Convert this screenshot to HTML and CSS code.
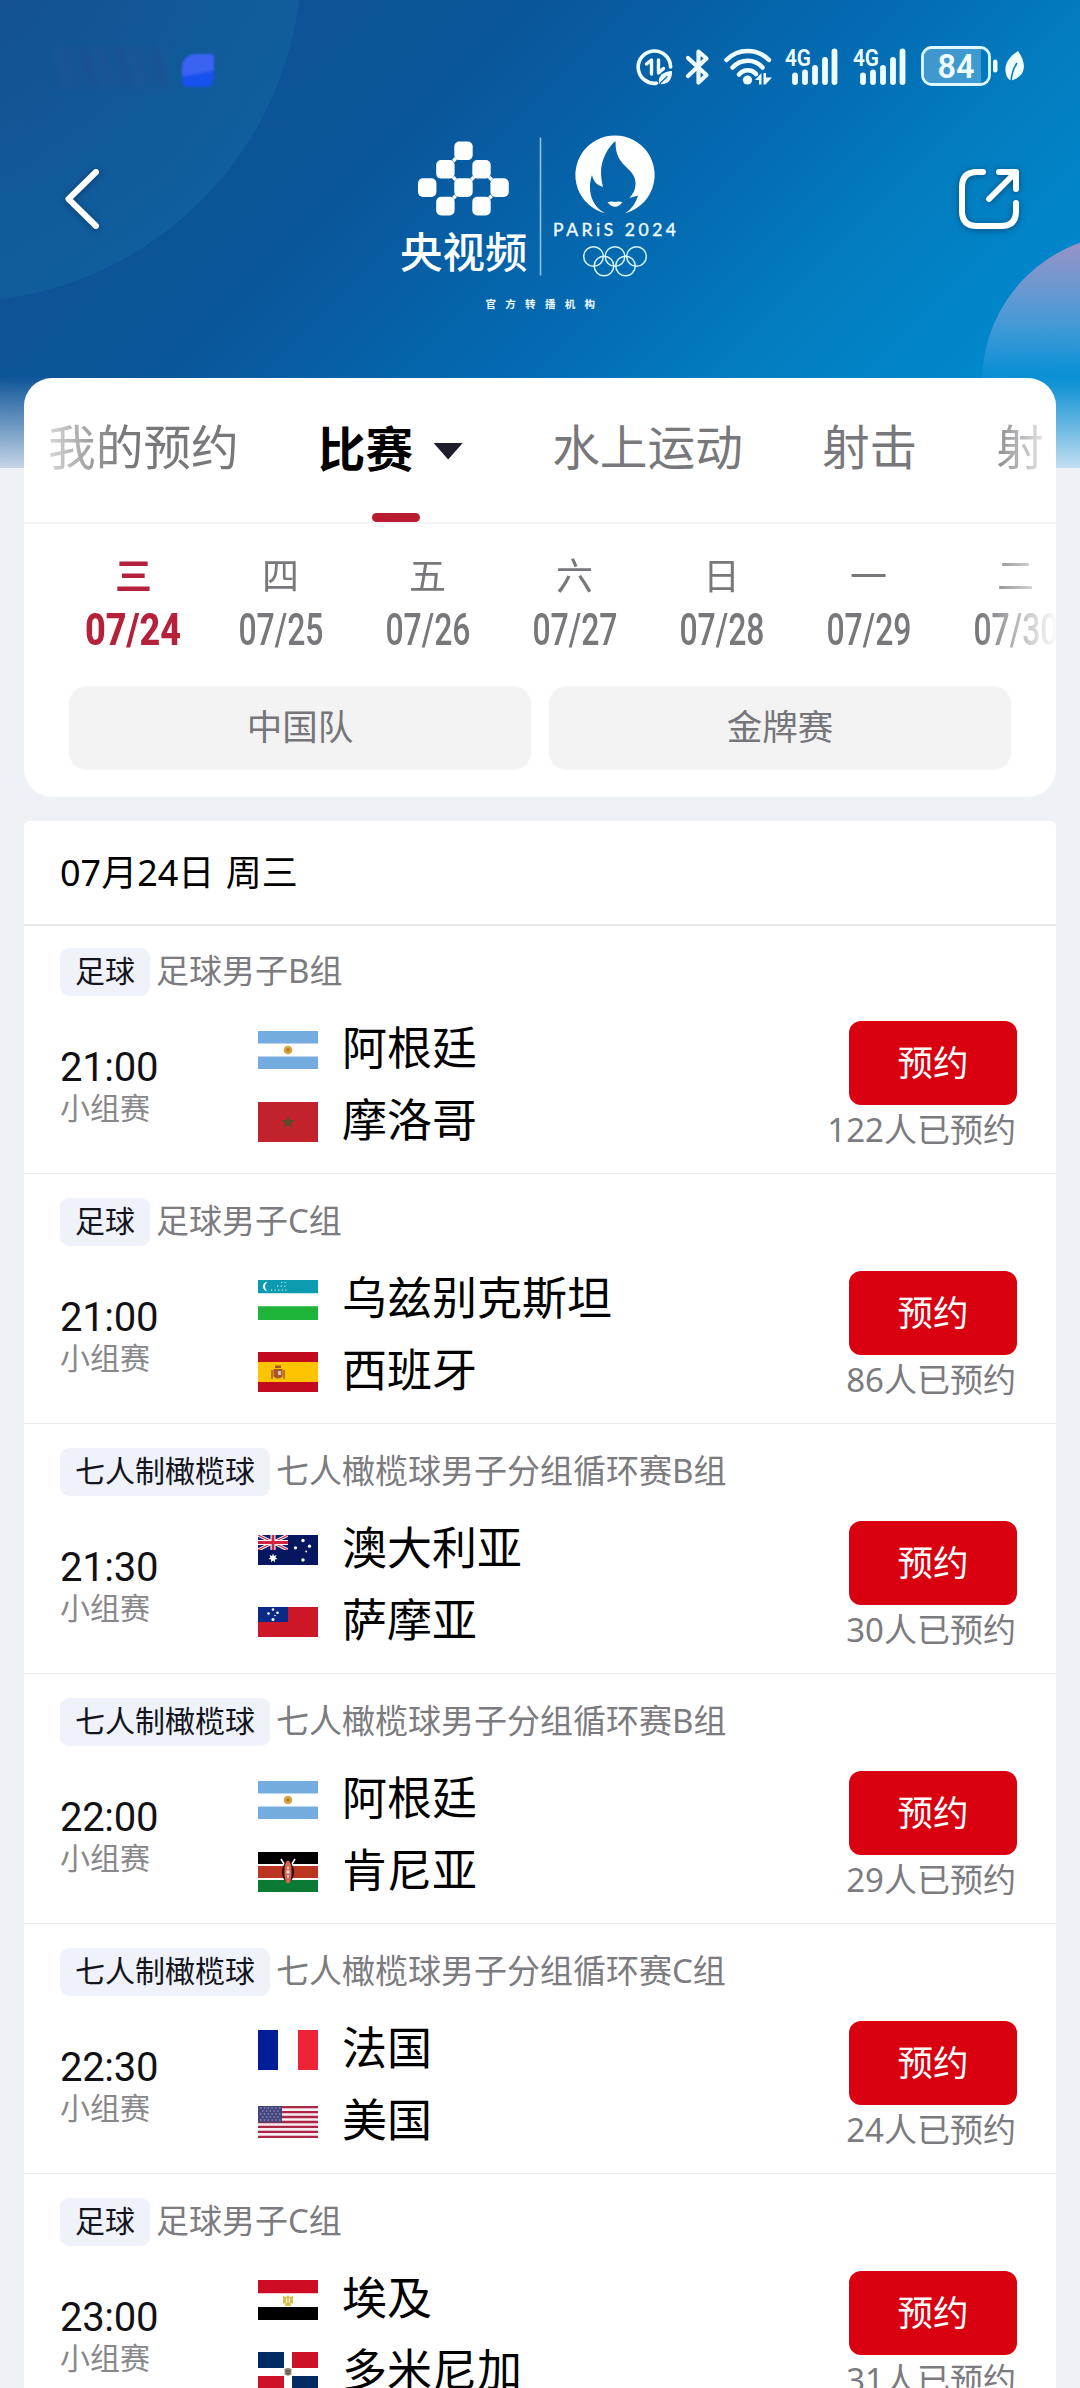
FILE: index.html
```html
<!DOCTYPE html>
<html lang="zh-CN">
<head>
<meta charset="utf-8">
<title>赛程</title>
<link rel="stylesheet" href="styles.css">
</head>
<body>
<svg class="defs" aria-hidden="true">
  <defs>
    <symbol id="signal" viewBox="0 0 54 40">
      <text x="0" y="19.500" textLength="26" lengthAdjust="spacingAndGlyphs" class="net">4G</text>
      <g stroke="#f0fdff" stroke-width="5.8" stroke-linecap="round">
        <path d="M10 29.5V36M20 26.5V36M30 22V36M40 14V36M49.500 5.500V36"/>
      </g>
    </symbol>
    <symbol id="ar" viewBox="0 0 60 38"><path fill="#74acdf" d="M0 0h60v38H0z"/><path fill="#fff" d="M0 12.500h60v13H0z"/><circle cx="30" cy="19" r="4.300" fill="#d9a341"/><circle cx="30" cy="19" r="2" fill="#b9812f"/></symbol>
    <symbol id="ma" viewBox="0 0 60 40"><path fill="#c1222b" d="M0 0h60v40H0z"/><path fill="#5b4a2b" d="M30 13.500l1.700 4.700 5 .1-4 3 1.500 4.800-4.200-2.900-4.200 2.900 1.500-4.800-4-3 5-.1z"/></symbol>
    <symbol id="uz" viewBox="0 0 60 40"><path fill="#fff" d="M0 0h60v40H0z"/><path fill="#0c9bb0" d="M0 0h60v13.300H0z"/><path fill="#1fb53a" d="M0 26.300h60V40H0z"/><path d="M9.500 2a4.600 4.600 0 1 0 0 9.200a5.500 5.500 0 0 1 0-9.200z" fill="#fff"/><path d="M23 2.500h6M19 6.200h10M13 10.200h16" stroke="#bfe6ec" stroke-width="1.200" stroke-dasharray="1.200 2.400"/></symbol>
    <symbol id="es" viewBox="0 0 60 40"><path fill="#c10a1e" d="M0 0h60v40H0z"/><path fill="#ffc400" d="M0 10h60v20H0z"/><path fill="#a8552c" d="M15.500 17h9v7.500q-4.500 4-9 0zM17 13.500h6v2.500h-6z"/><path stroke="#a8552c" stroke-width="1.500" d="M14 18v9M26 18v9"/><path fill="#d9c6bb" d="M20 19h3v4h-3z"/></symbol>
    <symbol id="jack" viewBox="0 0 30 15"><path fill="#0a1f6b" d="M0 0h30v15H0z"/><path d="M0 0l30 15M30 0L0 15" stroke="#fff" stroke-width="3.200"/><path d="M0 0l30 15M30 0L0 15" stroke="#d3304a" stroke-width="1.200"/><path d="M15 0v15M0 7.500h30" stroke="#fff" stroke-width="5"/><path d="M15 0v15M0 7.500h30" stroke="#d3243f" stroke-width="2.800"/></symbol>
    <symbol id="au" viewBox="0 0 60 30"><path fill="#06175f" d="M0 0h60v30H0z"/><use href="#jack" width="30" height="15"/><path fill="#fff" d="M15 18.600l1 2.500 2.500-1-1 2.500 2 1.500-2.700.5.200 2.700-2-1.800-2 1.800.2-2.700-2.700-.5 2-1.500-1-2.500 2.500 1z"/><g fill="#fff"><circle cx="45" cy="5.500" r="1.700"/><circle cx="37.500" cy="12.800" r="1.600"/><circle cx="51.500" cy="11.200" r="1.600"/><circle cx="48.200" cy="16.500" r=".9"/><circle cx="45" cy="25" r="1.700"/></g></symbol>
    <symbol id="ws" viewBox="0 0 60 30"><path fill="#ce1726" d="M0 0h60v30H0z"/><path fill="#0b2a85" d="M0 0h30v15H0z"/><g fill="#fff"><circle cx="15" cy="2.500" r="1.300"/><circle cx="10.500" cy="6.500" r="1.300"/><circle cx="19.500" cy="5.800" r="1.300"/><circle cx="17" cy="8.500" r=".8"/><circle cx="15" cy="12.500" r="1.500"/></g></symbol>
    <symbol id="ke" viewBox="0 0 60 40"><path fill="#fff" d="M0 0h60v40H0z"/><path d="M0 0h60v12H0z"/><path fill="#bb3620" d="M0 14h60v12H0z"/><path fill="#0b7a35" d="M0 28h60v12H0z"/><path d="M23 7l3 5M37 7l-3 5" stroke="#fff" stroke-width="1.600"/><ellipse cx="30" cy="20" rx="6" ry="10" fill="#1c0d0a"/><ellipse cx="30" cy="20" rx="3.700" ry="11.500" fill="#dc6350"/><path d="M30 14.500v3M30 23v3" stroke="#fff" stroke-width="1.200"/><circle cx="30" cy="20" r="1.600" fill="#fff"/></symbol>
    <symbol id="fr" viewBox="0 0 60 40"><path fill="#fff" d="M0 0h60v40H0z"/><path fill="#001e96" d="M0 0h20v40H0z"/><path fill="#ee2436" d="M40 0h20v40H40z"/></symbol>
    <symbol id="us" viewBox="0 0 60 32"><path fill="#f7eef1" d="M0 0h60v32H0z"/><path stroke="#ab2745" stroke-width="2.300" d="M0 1.200h60M0 6.100h60M0 11h60M0 16h60M0 20.900h60M0 25.800h60M0 30.800h60"/><path fill="#46467f" d="M0 0h24v16.500H0z"/><path stroke="#aeb2d2" stroke-width="1.200" stroke-dasharray="1.400 2.400" d="M2 2h21M2 8h21M2 14h21M4 5h18M4 11h18"/></symbol>
    <symbol id="eg" viewBox="0 0 60 40"><path fill="#fff" d="M0 0h60v40H0z"/><path fill="#ce0d24" d="M0 0h60v13.300H0z"/><path d="M0 27h60v13H0z"/><path fill="#d9bd4d" d="M25 16l3.500 1 1.500-2 1.500 2 3.500-1v8l-2.500-1 .5 3h-6l.5-3-2.500 1z"/><path d="M28.700 18.500v4M31.300 18.500v4" stroke="#fff"/></symbol>
    <symbol id="do" viewBox="0 0 60 40"><path fill="#fff" d="M0 0h60v40H0z"/><path fill="#022b61" d="M0 0h26v16H0zM34 24h26v16H34z"/><path fill="#cd1126" d="M34 0h26v16H34zM0 24h26v16H0z"/><path fill="#8b8578" d="M26.500 17q3.500-2 7 0v5q-3.500 3.500-7 0z"/><path d="M28 19h4M28.500 21.500h3" stroke="#463a31"/></symbol>
  </defs>
</svg>

<main class="screen">
  <header class="hero">
    <div class="statusbar">
      <div class="carrier"><i class="smudge"></i><i class="blob"></i></div>
      <div class="status-icons">
        <svg class="data" width="38" height="40" viewBox="0 0 38 40" fill="none" stroke="#f0fdff" stroke-linecap="round" stroke-linejoin="round">
          <path d="M20.500 37.200A16.200 16.200 0 1 1 34.600 21" stroke-width="3.600"/>
          <path d="M10.500 18L15.500 14V28M22.500 14V27L27.500 22.500" stroke-width="3.400"/>
          <path d="M23 38C21.500 29 28 25.500 36 25C36.500 34 31.500 39 23 38z" fill="#f0fdff" stroke="none"/><path d="M24 37.500L31 30.500" stroke="#0867ad" stroke-width="1.300"/>
        </svg>
        <svg class="bt" width="25" height="40" viewBox="0 0 25 40" fill="none" stroke="#f0fdff" stroke-width="4.200" stroke-linecap="round" stroke-linejoin="round"><path d="M3 12L21.500 29L13.500 36.500V5.500L21.500 12.500L3 30"/></svg>
        <svg class="wifi" width="48" height="40" viewBox="0 0 48 40" fill="none" stroke="#f0fdff" stroke-width="4.500" stroke-linecap="round">
          <path d="M2.500 14C14 2 33 2 45 14M8.500 21.500C17 12.500 30.500 12.500 38.500 21.500M15 28.500C20 23 27.500 23 32 28"/><circle cx="23.500" cy="34" r="4.600" fill="#f0fdff" stroke="none"/><path fill="#f0fdff" stroke="none" d="M31 34l6.500-7v11.500h-2.500v-4.500zM39.500 27h2.500v4.500h6l-6.500 7h-2z"/>
        </svg>
        <svg class="sig" width="54" height="40"><use href="#signal"/></svg>
        <svg class="sig2" width="54" height="40"><use href="#signal"/></svg>
        <svg class="power" width="80" height="42" viewBox="0 0 80 42"><path d="M12 3h49v36H12a8 8 0 0 1-8-8V11a8 8 0 0 1 8-8z" fill="#c9efff" fill-opacity=".3"/><rect x="2.500" y="2.500" width="67" height="37" rx="9" fill="none" stroke="#dff8ff" stroke-width="2.800"/><rect x="73" y="14.500" width="4.500" height="13" rx="2.200" fill="#f0fdff"/><text x="17.500" y="32.500" class="batt" textLength="37" lengthAdjust="spacingAndGlyphs">84</text></svg>
        <svg width="21" height="40" viewBox="0 0 21 40"><path d="M14 5C3 12 0 20 2 28C3 32 5 34 7 34.500C21 31 24 19 14 5z" fill="#f0fdff"/><path d="M7 36Q7.500 25 13 17" stroke="#0a7ac1" stroke-width="1.600" fill="none"/></svg>
      </div>
    </div>
    <nav class="topnav">
      <svg class="back" width="44" height="72" viewBox="0 0 44 72"><path d="M36 9L8.500 36L36 63" fill="none" stroke="#fff" stroke-width="6" stroke-linecap="round" stroke-linejoin="round"/></svg>
      <svg class="brand" width="290" height="190" viewBox="395 130 290 190">
        <g fill="#fff">
          <rect x="455.300" y="141.500" width="18.400" height="18.600" rx="5"/>
          <rect x="437.200" y="160" width="18.400" height="18.600" rx="5"/><rect x="473.300" y="160" width="18.400" height="18.600" rx="5"/>
          <rect x="419" y="178.300" width="18.400" height="18.600" rx="5"/><rect x="455.300" y="178.300" width="18.400" height="18.600" rx="5"/><rect x="491.400" y="178.300" width="18.400" height="18.600" rx="5"/>
          <rect x="437.200" y="196.800" width="18.400" height="18.600" rx="5"/><rect x="473.300" y="196.800" width="18.400" height="18.600" rx="5"/>
          <path d="M455.500 157l2.500 2.500-2.500 3-2.500-2.500zM455.500 176l2.500 2.500-2.500 2.500-2.500-2.500zM473.500 176l2.500 2.500-2.500 2.500-2.500-2.500zM491.500 176l2.500 2.500-2.500 2.500-2.500-2.500zM455.500 194.500l2.500 2.500-2.500 2.500-2.500-2.500zM491.500 194.500l2.500 2.500-2.500 2.500-2.500-2.500z"/>
        </g>
        <text class="brand-name" x="401" y="267.500">央视频</text>
        <path d="M541.500 137.500V275.500" stroke="#8fc1e4" stroke-width="1.600"/>
        <path fill="#fff" d="M606 213.300A39.600 39.600 0 1 1 626 213.300C633 209 637 202.500 639 195.500L630.500 198C635 193 637 188 636.500 182C635 166 616 168 616.500 141C609 147 602 160 602 172C602 178 603 183 604 187C597 185 594 180 593 175C588 190 592 206 606 213.300z"/>
        <path d="M608.500 202.500Q612 200.800 616 202Q620 200.800 623.500 202.500Q616 211 608.500 202.500z" fill="#fff"/>
        <text class="paris" x="554" y="235.700" textLength="123">PARiS 2024</text>
        <g fill="none" stroke="#d8f4ff" stroke-width="1.500"><circle cx="594.500" cy="256.500" r="9.800"/><circle cx="616" cy="256.500" r="9.800"/><circle cx="637.500" cy="256.500" r="9.800"/><circle cx="605" cy="266" r="9.800"/><circle cx="626.500" cy="266" r="9.800"/></g>
        <text class="official" x="486.500" y="307.500">官方转播机构</text>
      </svg>
      <svg class="share" width="72" height="72" viewBox="0 0 72 72"><path d="M30 9H24Q9 9 9 24V48Q9 63 24 63H48Q63 63 63 48V40M46 9H63V26M62 10L36 36" fill="none" stroke="#fff" stroke-width="6" stroke-linecap="round" stroke-linejoin="round"/></svg>
    </nav>
  </header>

  <section class="filter-card">
    <div class="tabs">
      <span class="tab">我的预约</span>
      <span class="tab tab-active">比赛<i class="caret"></i></span>
      <span class="tab">水上运动</span>
      <span class="tab">射击</span>
      <span class="tab">射</span>
    </div>
    <div class="days">
      <div class="day day-active"><span>三</span><b>07/24</b></div>
      <div class="day"><span>四</span><b>07/25</b></div>
      <div class="day"><span>五</span><b>07/26</b></div>
      <div class="day"><span>六</span><b>07/27</b></div>
      <div class="day"><span>日</span><b>07/28</b></div>
      <div class="day"><span>一</span><b>07/29</b></div>
      <div class="day"><span>二</span><b>07/30</b></div>
    </div>
    <div class="chips"><span class="chip">中国队</span><span class="chip">金牌赛</span></div>
  </section>

  <section class="schedule">
    <h2 class="date">07月24日 周三</h2>

    <article class="match">
      <div class="event"><span class="tag">足球</span><span>足球男子B组</span></div>
      <div class="detail">
        <div class="when"><time>21:00</time><span>小组赛</span></div>
        <div class="teams">
          <div class="team"><svg width="60" height="38"><use href="#ar"/></svg><span>阿根廷</span></div>
          <div class="team"><svg width="60" height="40"><use href="#ma"/></svg><span>摩洛哥</span></div>
        </div>
        <div class="book"><button>预约</button><span>122人已预约</span></div>
      </div>
    </article>

    <article class="match">
      <div class="event"><span class="tag">足球</span><span>足球男子C组</span></div>
      <div class="detail">
        <div class="when"><time>21:00</time><span>小组赛</span></div>
        <div class="teams">
          <div class="team"><svg width="60" height="40"><use href="#uz"/></svg><span>乌兹别克斯坦</span></div>
          <div class="team"><svg width="60" height="40"><use href="#es"/></svg><span>西班牙</span></div>
        </div>
        <div class="book"><button>预约</button><span>86人已预约</span></div>
      </div>
    </article>

    <article class="match">
      <div class="event"><span class="tag">七人制橄榄球</span><span>七人橄榄球男子分组循环赛B组</span></div>
      <div class="detail">
        <div class="when"><time>21:30</time><span>小组赛</span></div>
        <div class="teams">
          <div class="team"><svg width="60" height="30"><use href="#au"/></svg><span>澳大利亚</span></div>
          <div class="team"><svg width="60" height="30"><use href="#ws"/></svg><span>萨摩亚</span></div>
        </div>
        <div class="book"><button>预约</button><span>30人已预约</span></div>
      </div>
    </article>

    <article class="match">
      <div class="event"><span class="tag">七人制橄榄球</span><span>七人橄榄球男子分组循环赛B组</span></div>
      <div class="detail">
        <div class="when"><time>22:00</time><span>小组赛</span></div>
        <div class="teams">
          <div class="team"><svg width="60" height="38"><use href="#ar"/></svg><span>阿根廷</span></div>
          <div class="team"><svg width="60" height="40"><use href="#ke"/></svg><span>肯尼亚</span></div>
        </div>
        <div class="book"><button>预约</button><span>29人已预约</span></div>
      </div>
    </article>

    <article class="match">
      <div class="event"><span class="tag">七人制橄榄球</span><span>七人橄榄球男子分组循环赛C组</span></div>
      <div class="detail">
        <div class="when"><time>22:30</time><span>小组赛</span></div>
        <div class="teams">
          <div class="team"><svg width="60" height="40"><use href="#fr"/></svg><span>法国</span></div>
          <div class="team"><svg width="60" height="32"><use href="#us"/></svg><span>美国</span></div>
        </div>
        <div class="book"><button>预约</button><span>24人已预约</span></div>
      </div>
    </article>

    <article class="match">
      <div class="event"><span class="tag">足球</span><span>足球男子C组</span></div>
      <div class="detail">
        <div class="when"><time>23:00</time><span>小组赛</span></div>
        <div class="teams">
          <div class="team"><svg width="60" height="40"><use href="#eg"/></svg><span>埃及</span></div>
          <div class="team"><svg width="60" height="40"><use href="#do"/></svg><span>多米尼加</span></div>
        </div>
        <div class="book"><button>预约</button><span>31人已预约</span></div>
      </div>
    </article>
  </section>
</main>
</body>
</html>
```
FILE: styles.css
```css
* { box-sizing: border-box; }

body {
  margin: 0;
  font-family: "Noto Sans", "Noto Sans CJK SC", sans-serif;
  color: #000;
  background: #eef1f6;
}

svg { display: block; flex: none; }

.defs { position: absolute; width: 0; height: 0; }

.screen {
  height: 2388px;
  overflow: hidden;
  background: #eef1f6;
}

/* Header */
.hero {
  height: 468px;
  background:
    linear-gradient(to bottom, rgba(238, 241, 247, 0) 376px, rgba(238, 241, 247, .38) 420px, rgba(238, 241, 247, .82) 468px),
    radial-gradient(circle 344px at -42px -42px, rgba(30, 110, 165, .02) 0, rgba(25, 120, 170, .28) 343px, transparent 344px),
    linear-gradient(135deg, #134f90 0%, #0a569b 35%, #036cb3 59%, #037dc0 72%, #008cd2 94%);
  position: relative;
  overflow: hidden;
}

.hero::after {
  content: "";
  position: absolute;
  left: 982px;
  top: 234px;
  width: 296px;
  height: 234px;
  border-radius: 148px 148px 0 0;
  background: linear-gradient(to bottom, #a090c4 0, #6f98d0 50px, #3f9ad6 95px, rgba(25, 150, 218, .6) 135px, rgba(25, 150, 218, 0) 165px);
}

.statusbar {
  display: flex;
  justify-content: space-between;
  height: 134px;
  padding: 46px 55px 0 55px;
}

.carrier { display: flex; gap: 12px; }

.smudge {
  width: 115px;
  height: 42px;
  opacity: .45;
  filter: blur(4px);
  background: repeating-linear-gradient(75deg, #27478a 0 8px, #1a5b9c 8px 17px, #2f4a88 17px 23px, #15579a 23px 34px);
}

.blob {
  width: 32px;
  height: 33px;
  margin-top: 8px;
  border-radius: 14px 4px 8px 6px;
  filter: blur(1px);
  background: linear-gradient(170deg, #3a63f4 55%, #1750ec 62%);
}

.status-icons { display: flex; }
.data { margin-right: 11px; }
.bt { margin-right: 14px; }
.wifi { margin-right: 13px; }
.sig { margin-right: 14px; }
.sig2 { margin-right: 13px; }
.power { margin: -1px 4px 0 0; }

.net { font: 600 23px Roboto, sans-serif; fill: #f0fdff; }
.batt { font: 600 33px Roboto, sans-serif; fill: #f0fdff; }

.topnav {
  display: flex;
  justify-content: space-between;
  padding: 0 55px 0 60px;
}

.back, .share { margin-top: 29px; filter: drop-shadow(0 1px 3px rgba(0, 30, 60, .5)); }
.brand { margin-top: -4px; margin-left: 20px; }
.brand-name { font: 500 42.500px "Noto Sans CJK SC", sans-serif; fill: #fff; }
.paris { font: 400 17.500px Lato, sans-serif; fill: #f0fbff; stroke: #f0fbff; stroke-width: .4; }
.official { font: 700 10.500px "Noto Sans CJK SC", sans-serif; letter-spacing: 9.300px; fill: #f0fbff; }

/* Filter card */
.filter-card {
  position: relative;
  height: 419px;
  margin: -90px 24px 24px;
  border-radius: 28px;
  background: #fff;
  overflow: hidden;
}

.tabs {
  display: flex;
  gap: 79px;
  height: 146px;
  padding-left: 24px;
  border-bottom: 2px solid #f2f3f5;
  font-size: 47.700px;
  line-height: 138px;
  color: #77777c;
  white-space: nowrap;
}

.tab { flex: none; }
.tab:first-child {
  -webkit-mask-image: linear-gradient(to right, rgba(0, 0, 0, .3), #000 75px);
  mask-image: linear-gradient(to right, rgba(0, 0, 0, .3), #000 75px);
}
.tab:last-child {
  -webkit-mask-image: linear-gradient(to right, rgba(0, 0, 0, .85), transparent 62px);
  mask-image: linear-gradient(to right, rgba(0, 0, 0, .85), transparent 62px);
}

.tab-active {
  position: relative;
  display: flex;
  align-items: center;
  gap: 20px;
  height: 142px;
  padding-right: 10px;
  font-weight: 700;
  line-height: 136px;
  color: #000;
}
.tab-active::after {
  content: "";
  position: absolute;
  left: 54px;
  bottom: -2px;
  width: 48px;
  height: 9px;
  border-radius: 5px;
  background: #b91c31;
}

.caret {
  width: 30px;
  height: 17px;
  margin-top: 4px;
  background: #201c2c;
  clip-path: polygon(0 0, 100% 0, 50% 100%);
}

.days {
  display: flex;
  height: 162px;
  padding: 28px 0 0 36px;
  color: #77777c;
  -webkit-mask-image: linear-gradient(to right, #000 955px, transparent 1034px);
  mask-image: linear-gradient(to right, #000 955px, transparent 1034px);
}

.day {
  flex: 0 0 147px;
  display: flex;
  flex-direction: column;
  align-items: center;
  font-size: 37px;
  line-height: 48px;
}
.day b {
  margin-top: 3px;
  font: 500 45px/54px Roboto, sans-serif;
  transform: scaleX(.71);
}
.day-active { color: #b5203a; font-weight: 700; }
.day-active b { font-weight: 800; transform: scaleX(.8); }

.chips { display: flex; gap: 18px; padding: 0 45px; }
.chip {
  flex: 1;
  height: 84px;
  border-radius: 18px;
  background: #f3f3f3;
  font-size: 35.500px;
  line-height: 81px;
  text-align: center;
  color: #75757a;
}

/* Schedule */
.schedule {
  margin: 0 24px;
  border-radius: 6px 6px 0 0;
  background: #fff;
}

.date {
  height: 105px;
  margin: 0 0 -2px;
  padding-left: 36px;
  border-bottom: 2px solid #e7e9eb;
  font-size: 36px;
  font-weight: 400;
  line-height: 103px;
  word-spacing: 2px;
}

.match {
  height: 250px;
  padding: 24px 39px 0 36px;
  border-bottom: 1px solid #e9eaec;
}

.event {
  display: flex;
  gap: 6px;
  font-size: 33px;
  line-height: 46px;
  color: #7b7b80;
}
.tag {
  height: 48px;
  padding: 0 15px;
  border-radius: 9px;
  background: #eff2f8;
  font-size: 30px;
  color: #14141f;
}

.detail { display: flex; padding-top: 18px; }

.when { width: 198px; padding-top: 30px; }
.when time, .when span { display: block; }
.when time { font: 400 40px/48px Roboto, sans-serif; letter-spacing: -.3px; color: #111116; }
.when span { font-size: 30px; line-height: 32px; color: #88888c; }

.teams { flex: 1; }
.team {
  display: flex;
  align-items: center;
  gap: 24px;
  height: 72px;
  font-size: 45px;
  line-height: 60px;
}
.team span { margin-top: -4px; }

.book {
  display: flex;
  flex-direction: column;
  align-items: flex-end;
  padding-top: 7px;
}
.book button {
  width: 168px;
  height: 84px;
  padding: 0 0 6px;
  border: 0;
  border-radius: 12px;
  background: #d9000f;
  color: #fff;
  font: inherit;
  font-size: 35.500px;
}
.book span { padding-right: 1px; font-size: 33px; line-height: 50px; color: #7b7b80; }
```
